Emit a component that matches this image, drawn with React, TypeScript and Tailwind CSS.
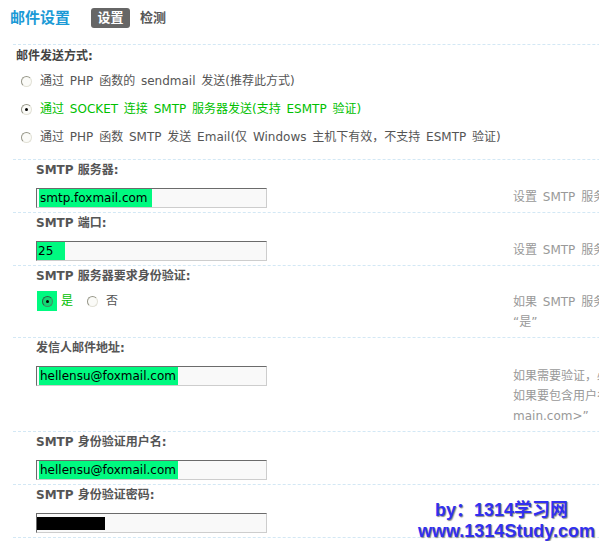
import React from "react";

const FONT = "font-['DejaVu_Sans','Noto_Sans_CJK_SC',sans-serif]";

function Radio({ checked = false, green = false }: { checked?: boolean; green?: boolean }) {
  if (green) {
    return (
      <span className="relative inline-block w-[11px] h-[11px] rounded-full border border-t-[#2f5f45] border-l-[#2f5f45] border-b-[#3f8f65] border-r-[#3f8f65] bg-[#12d874] shrink-0">
        {checked && <span className="absolute left-[3px] top-[3px] w-[3px] h-[3px] rounded-full bg-black" />}
      </span>
    );
  }
  return (
    <span className="relative inline-block w-[11px] h-[11px] rounded-full border border-t-[#979789] border-l-[#979789] border-b-[#e2e1d6] border-r-[#e2e1d6] bg-[#fbfbf8] shrink-0">
      {checked && <span className="absolute left-[3px] top-[3px] w-[3px] h-[3px] rounded-full bg-black" />}
    </span>
  );
}

function Input({ children }: { children?: React.ReactNode }) {
  return (
    <div className="w-[231px] h-[20px] border border-t-[#6b6b6b] border-l-[#6b6b6b] border-b-[#cdcdcd] border-r-[#cdcdcd] bg-[#f9f9f9] flex items-stretch">
      {children}
    </div>
  );
}

function Hl({ w, ml, children }: { w: string; ml: string; children: React.ReactNode }) {
  return (
    <span className={`${w} ${ml} bg-[#00fa80] text-black text-[12px] leading-[18px] pl-[1px] whitespace-nowrap overflow-hidden`}>
      {children}
    </span>
  );
}

function Section({
  label,
  input,
  desc,
  rowMt = "mt-[9px]",
  descMt = "-mt-px",
  pb = "pb-[4px]",
}: {
  label: string;
  input: React.ReactNode;
  desc?: React.ReactNode;
  rowMt?: string;
  descMt?: string;
  pb?: string;
}) {
  return (
    <div className={`border-t border-dashed border-[#d3e8f5] pt-[1px] ${pb} pl-[23px]`}>
      <div className="h-[18px] leading-[18px] font-bold text-[#555] whitespace-nowrap">{label}</div>
      <div className={`flex items-start ${rowMt}`}>
        <div className="w-[477px] shrink-0">{input}</div>
        <div className={`text-[#999] leading-[20px] whitespace-nowrap [word-spacing:2px] ${descMt}`}>{desc}</div>
      </div>
    </div>
  );
}

export default function App() {
  return (
    <div className={`relative w-[599px] h-[541px] overflow-hidden bg-white text-[12px] ${FONT}`}>
      <div className="w-[900px]">
        {/* Header */}
        <div className="h-[36px] flex items-center pl-[10px]">
          <span className="text-[15px] font-bold text-[#1b9ad6] leading-none">邮件设置</span>
          <span className="ml-[21px] w-[39px] h-[20px] rounded-[3px] bg-[#666] text-white font-bold text-[13px] flex items-center justify-center">
            设置
          </span>
          <span className="ml-[10px] text-[#555] font-bold text-[13px]">检测</span>
        </div>

        <div className="ml-[13px] mt-[8px]">
          {/* Send method */}
          <div className="border-t border-dashed border-[#d3e8f5] pt-[2px] pb-[8px]">
            <div className="pl-[3px] h-[18px] leading-[18px] font-bold text-[#444]">邮件发送方式:</div>
            <div className="mt-[2px] pl-[8px] [word-spacing:2px]">
              <div className="h-[28px] flex items-center gap-[8px] text-[#555] whitespace-nowrap">
                <Radio />
                <span>通过 PHP 函数的 sendmail 发送(推荐此方式)</span>
              </div>
              <div className="h-[28px] flex items-center gap-[8px] text-[#00c000] whitespace-nowrap">
                <Radio checked />
                <span>通过 SOCKET 连接 SMTP 服务器发送(支持 ESMTP 验证)</span>
              </div>
              <div className="h-[28px] flex items-center gap-[8px] text-[#555] whitespace-nowrap">
                <Radio />
                <span>通过 PHP 函数 SMTP 发送 Email(仅 Windows 主机下有效，不支持 ESMTP 验证)</span>
              </div>
            </div>
          </div>

          <Section
            label="SMTP 服务器:"
            input={
              <Input>
                <Hl w="w-[113px]" ml="ml-[2px]">smtp.foxmail.com</Hl>
              </Input>
            }
            desc={<div>设置 SMTP 服务器的地址</div>}
          />

          <Section
            label="SMTP 端口:"
            input={
              <Input>
                <Hl w="w-[28px]" ml="ml-0">25</Hl>
              </Input>
            }
            desc={<div>设置 SMTP 服务器的端口，默认为 25</div>}
          />

          <Section
            label="SMTP 服务器要求身份验证:"
            rowMt="mt-[6px]"
            descMt="mt-[1px]"
            pb="pb-[5px]"
            input={
              <div className="flex items-center h-[20px] whitespace-nowrap">
                <span className="ml-[1px] w-[20px] h-[20px] bg-[#00fa80] flex items-center justify-center">
                  <Radio checked green />
                </span>
                <span className="ml-[4px] text-[#00c000]">是</span>
                <span className="ml-[14px] flex items-center">
                  <Radio />
                </span>
                <span className="ml-[8px] text-[#555]">否</span>
              </div>
            }
            desc={
              <>
                <div>如果 SMTP 服务器要求通过身份验证才可以发信，请选择</div>
                <div>“是”</div>
              </>
            }
          />

          <Section
            label="发信人邮件地址:"
            descMt="mt-0"
            pb="pb-[5px]"
            input={
              <Input>
                <Hl w="w-[139px]" ml="ml-[2px]">hellensu@foxmail.com</Hl>
              </Input>
            }
            desc={
              <>
                <div>如果需要验证，必须为本服务器的地址。</div>
                <div>如果要包含用户名，格式为：“username &lt;user@do</div>
                <div>main.com&gt;”</div>
              </>
            }
          />

          <Section
            label="SMTP 身份验证用户名:"
            input={
              <Input>
                <Hl w="w-[139px]" ml="ml-[2px]">hellensu@foxmail.com</Hl>
              </Input>
            }
          />

          <Section
            label="SMTP 身份验证密码:"
            input={
              <Input>
                <span className="mt-[3px] w-[68px] h-[13px] bg-black" />
              </Input>
            }
          />

          <div className="border-t border-dashed border-[#d3e8f5]" />
        </div>
      </div>

      {/* Watermark overlay */}
      <div className="absolute left-[418px] top-[500px] font-['Liberation_Sans',Arial,sans-serif] font-bold text-[18px] leading-[21px] text-[#3030f0] [text-shadow:1px_1px_1px_#8a8a8a] whitespace-nowrap">
        <div className="pl-[17px] font-['Liberation_Sans','Noto_Sans_CJK_SC',sans-serif]">by：1314学习网</div>
        <div>www.1314Study.com</div>
      </div>
    </div>
  );
}
